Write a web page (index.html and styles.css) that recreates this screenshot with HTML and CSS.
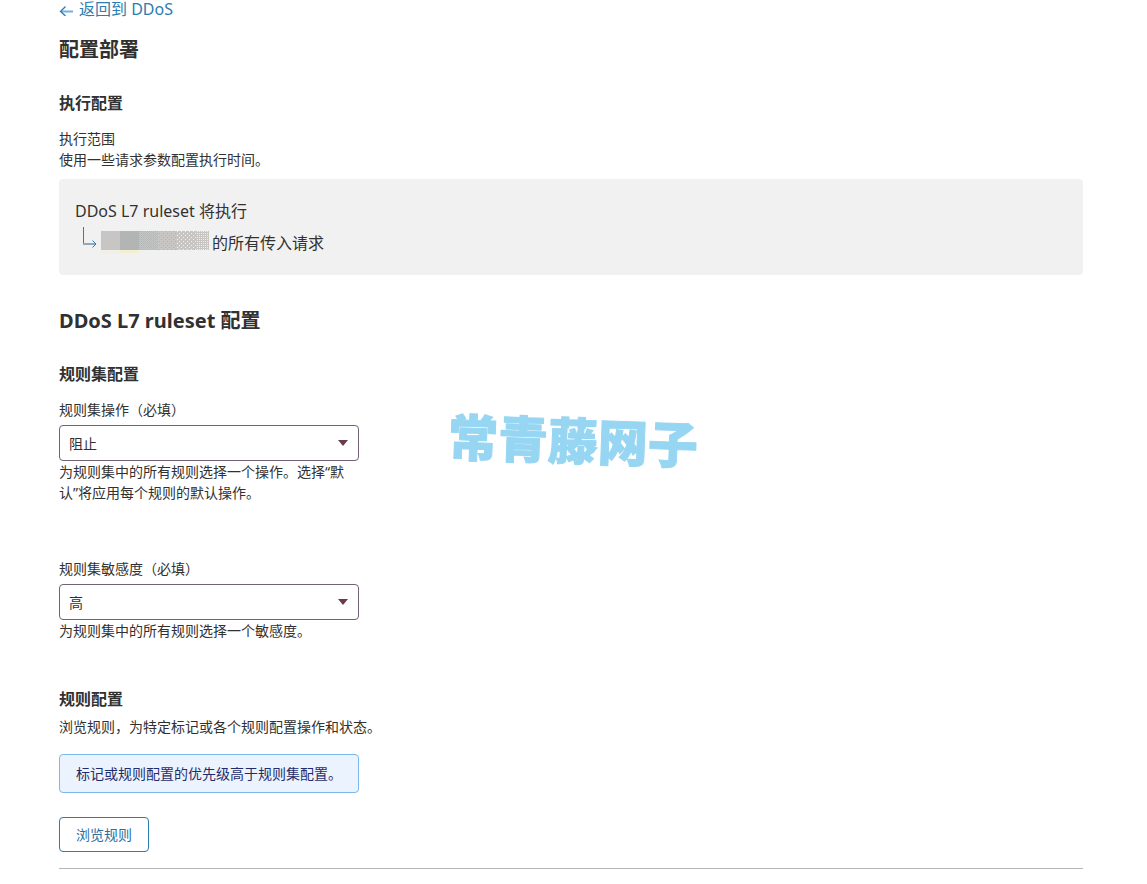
FILE: index.html
```html
<!DOCTYPE html>
<html lang="zh-CN">
<head>
    <meta charset="UTF-8">
    <meta name="viewport" content="width=device-width, initial-scale=1.0">
    <title>DDoS L7 ruleset</title>
    <link rel="stylesheet" href="styles.css">
</head>
<body>
    <main class="page">
        <a class="back-link" href="#">
            <svg width="14" height="14" viewBox="0 0 14 14" fill="none" aria-hidden="true">
                <path d="M2 9.5 H14" stroke="#6fb0ea" stroke-width="2" />
                <path d="M6.5 4.5 L1.5 9.5 L6.5 14" stroke="#2c7cb0" stroke-width="1.3" />
            </svg>
            <span>返回到 DDoS</span>
        </a>

        <h2>配置部署</h2>

        <h3>执行配置</h3>
        <p>执行范围</p>
        <p>使用一些请求参数配置执行时间。</p>

        <div class="scope">
            <div class="scope-line">DDoS L7 ruleset 将执行</div>
            <div class="scope-line scope-target">
                <svg class="branch" width="16" height="24" viewBox="0 0 16 24" fill="none" aria-hidden="true">
                    <path d="M1.5 0 V17" stroke="#2f7bbf" />
                    <path d="M1 17 H13" stroke="#8fa9bf" stroke-width="2" />
                    <path d="M10.5 13.5 L14 17 L10.5 20.5" stroke="#2f7bbf" />
                </svg>
                <!-- masked host name -->
                <svg class="mask" width="108" height="24" viewBox="0 0 108 24" aria-hidden="true">
                    <defs>
                        <pattern id="fine" width="2" height="2" patternUnits="userSpaceOnUse">
                            <rect width="2" height="2" fill="#c8c5c5" />
                            <rect width="1" height="1" fill="#b2b5b4" />
                            <rect x="1" y="1" width="1" height="1" fill="#b9bbba" />
                        </pattern>
                        <pattern id="dots" width="4" height="4" patternUnits="userSpaceOnUse">
                            <rect width="4" height="4" fill="#c8c5c5" />
                            <rect width="1" height="1" fill="#b2b5b4" />
                            <rect x="2" y="2" width="1" height="1" fill="#b2b5b4" />
                        </pattern>
                        <pattern id="cream" width="4" height="4" patternUnits="userSpaceOnUse">
                            <rect width="4" height="4" fill="#c8c5c5" />
                            <rect width="1" height="1" fill="#f6efc8" />
                            <rect x="2" y="2" width="1" height="1" fill="#f6efc8" />
                        </pattern>
                        <pattern id="check" width="2" height="2" patternUnits="userSpaceOnUse">
                            <rect width="2" height="2" fill="#c8c5c5" />
                            <rect width="1" height="1" fill="#f6efc8" />
                        </pattern>
                    </defs>
                    <rect width="19" height="19" fill="#c8c5c5" />
                    <rect x="19" width="19" height="19" fill="#b2b5b4" />
                    <rect x="38" width="19" height="19" fill="url(#fine)" />
                    <rect x="57" width="19" height="19" fill="url(#dots)" />
                    <rect x="76" width="19" height="19" fill="url(#cream)" />
                    <rect x="95" width="13" height="19" fill="url(#check)" />
                    <rect y="19" width="19" height="4" fill="#f2f0e6" />
                    <rect x="19" y="19" width="19" height="3" fill="#f4efcf" />
                </svg>
                <span>的所有传入请求</span>
            </div>
        </div>

        <h2 class="ruleset-title">DDoS L7 ruleset 配置</h2>

        <h3>规则集配置</h3>
        <div class="field">
            <label for="action">规则集操作（必填）</label>
            <div class="select-box">
                <select id="action">
                    <option selected>阻止</option>
                </select>
                <svg class="caret" width="10" height="6" viewBox="0 0 10 6" aria-hidden="true"><path d="M0 0 H10 L5 6 Z" /></svg>
            </div>
            <p>为规则集中的所有规则选择一个操作。选择“默认”将应用每个规则的默认操作。</p>
        </div>

        <div class="field">
            <label for="sensitivity">规则集敏感度（必填）</label>
            <div class="select-box">
                <select id="sensitivity">
                    <option selected>高</option>
                </select>
                <svg class="caret" width="10" height="6" viewBox="0 0 10 6" aria-hidden="true"><path d="M0 0 H10 L5 6 Z" /></svg>
            </div>
            <p>为规则集中的所有规则选择一个敏感度。</p>
        </div>

        <h3 class="rules-title">规则配置</h3>
        <p>浏览规则，为特定标记或各个规则配置操作和状态。</p>
        <div class="note">标记或规则配置的优先级高于规则集配置。</div>
        <button type="button">浏览规则</button>
        <hr>
    </main>

    <div class="watermark">常青藤网子</div>
</body>
</html>
```
FILE: styles.css
```css
body {
    margin: 0;
    background-color: #fff;
    color: #313131;
    font-family: "Noto Sans", "Noto Sans CJK SC", sans-serif;
    font-size: 14px;
    line-height: 21px;
}
.page {
    padding: 0 64px 15px 59px;
}
h2, h3, p {
    margin: 0;
}
h2 {
    margin-top: 17px;
    font-size: 20px;
    line-height: 30px;
}
h3 {
    margin: 26px 0 13px;
    font-size: 16px;
    line-height: 24px;
}
.back-link {
    display: flex;
    align-items: center;
    gap: 6px;
    width: max-content;
    color: #2c7cb0;
    font-size: 16px;
    line-height: 18px;
    text-decoration: none;
}
.scope {
    margin-top: 9px;
    padding: 16px;
    border-radius: 4px;
    background-color: #f1f1f1;
    font-size: 16px;
    line-height: 32px;
}
.scope-target {
    display: flex;
    align-items: center;
    height: 32px;
    padding-left: 7px;
}
.branch {
    margin-bottom: 8px;
}
.mask {
    margin: 0 3px;
}
.ruleset-title {
    margin-top: 31px;
}
.field {
    width: 300px;
}
.field + .field {
    margin-top: 55px;
}
label {
    display: block;
    margin-bottom: 5px;
}
.select-box {
    position: relative;
}
select {
    appearance: none;
    display: block;
    width: 100%;
    height: 36px;
    padding: 0 9px;
    border: 1px solid #75607a;
    border-radius: 4px;
    background-color: #fff;
    color: inherit;
    font: inherit;
}
.caret {
    position: absolute;
    top: 15px;
    right: 11px;
    fill: #693c48;
    pointer-events: none;
}
.rules-title {
    margin: 46px 0 5px;
}
.note {
    box-sizing: border-box;
    width: 300px;
    margin: 17px 0 24px;
    padding: 8px 16px;
    border: 1px solid #7ab8ee;
    border-radius: 4px;
    background-color: #ebf3ff;
    color: #1f2d6b;
}
button {
    padding: 6px 16px;
    border: 1px solid #2c7cb0;
    border-radius: 4px;
    background-color: #fff;
    color: #2c6f9f;
    font: inherit;
    cursor: pointer;
}
button:hover {
    background-color: #ebf3ff;
}
hr {
    margin: 16px 0 0;
    border: 0;
    border-top: 1px solid #b5b5b5;
}
.watermark {
    position: absolute;
    top: 411px;
    left: 448px;
    color: #97d6f2;
    font-size: 50px;
    font-weight: 900;
    line-height: 60px;
    transform: rotate(2deg);
    -webkit-text-stroke: 1px #97d6f2;
    pointer-events: none;
}
```
